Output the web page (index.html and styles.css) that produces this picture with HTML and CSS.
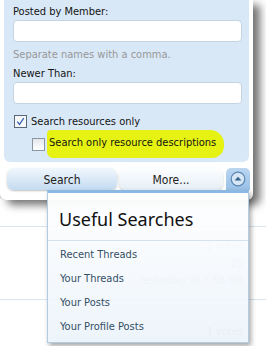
FILE: index.html
```html
<!DOCTYPE html>
<html lang="en">
<head>
    <meta charset="UTF-8">
    <meta name="viewport" content="width=device-width, initial-scale=1.0">
    <title>Search Resources</title>
    <link rel="stylesheet" href="styles.css">
</head>
<body>
    <div class="page">
        <div class="row row-top"></div>
        <div class="row row-mid">
            <div class="stats">
                <span>1 votes</span>
                <span>25</span>
                <span>Yesterday at 7:58 PM</span>
            </div>
        </div>
        <div class="row row-low">
            <div class="stats"><span>1 votes</span></div>
        </div>
    </div>

    <div class="popup">
        <form class="search-form" onsubmit="return false">
            <div class="fields">
                <label class="field-label" for="member">Posted by Member:</label>
                <input type="text" id="member" class="text-input">
                <p class="hint">Separate names with a comma.</p>
                <label class="field-label" for="newer">Newer Than:</label>
                <input type="text" id="newer" class="text-input">
                <label class="check">
                    <span class="box checked">
                        <svg width="9" height="9" viewBox="0 0 9 9"><path d="M1.2 4.6 L3.5 7.4 L7.8 1.2" fill="none" stroke="#3a63b0" stroke-width="1.3"/></svg>
                    </span>
                    Search resources only
                </label>
                <label class="check sub">
                    <span class="box"></span>
                    <span class="mark">Search only resource descriptions</span>
                </label>
            </div>
            <div class="buttons">
                <button class="btn primary">Search</button>
                <button class="btn">More...</button>
                <div class="toggle">
                    <svg width="16" height="16" viewBox="0 0 16 16">
                        <circle cx="8" cy="8" r="6.8" fill="#d6e6f6" stroke="#5b86b1" stroke-width="1.2"/>
                        <path d="M4.6 9.6 L8 5.8 L11.4 9.6 Z" fill="#34608c"/>
                    </svg>
                    <div class="menu">
                        <h3 class="menu-title">Useful Searches</h3>
                        <ul class="menu-list">
                            <li><a href="#">Recent Threads</a></li>
                            <li><a href="#">Your Threads</a></li>
                            <li><a href="#">Your Posts</a></li>
                            <li><a href="#">Your Profile Posts</a></li>
                        </ul>
                    </div>
                </div>
            </div>
        </form>
    </div>
</body>
</html>
```

FILE: styles.css
```css
body {
    margin: 0;
    background-color: #ffffff;
    font-family: 'DejaVu Sans Condensed', 'Liberation Sans', sans-serif;
    font-size: 11px;
    color: #141414;
    position: relative;
    height: 346px;
    overflow: hidden;
}
.row {
    border-bottom: 1px solid #d9e5ef;
}
.row-top {
    height: 226px;
}
.row-mid {
    height: 72px;
}
.row-low {
    height: 60px;
    border-bottom: none;
}
.stats {
    display: flex;
    flex-direction: column;
    align-items: flex-end;
    padding-right: 23px;
    line-height: 17px;
    color: #c8d0d8;
}
.row-mid .stats {
    padding-top: 11px;
}
.row-low .stats {
    padding-top: 23px;
}

/* popup panel */
.popup {
    position: absolute;
    left: 0;
    top: 0;
    width: 253px;
    height: 200px;
    background: #ffffff;
    border-radius: 0 0 6px 6px;
    box-shadow: -1px 0 0 #c4c4c4, 7px 5px 8px rgba(0, 0, 0, 0.55);
}
.fields {
    margin: 0 4px;
    padding: 4px 7px 10px 9px;
    background: #d9e8f7;
    border-radius: 0 0 6px 6px;
}
.field-label {
    display: block;
    line-height: 16px;
}
.text-input {
    display: block;
    width: 100%;
    height: 22px;
    margin: 0 0 5px;
    border: 1px solid #c5d4e3;
    border-radius: 4px;
    background: #ffffff;
    box-sizing: border-box;
}
.hint {
    margin: 0 0 3px;
    line-height: 16px;
    color: #979797;
}
.check {
    display: flex;
    align-items: center;
    height: 16px;
    margin-top: 9px;
    gap: 4px;
    padding-left: 1px;
}
.check.sub {
    margin-top: 7px;
    padding-left: 19px;
    gap: 2px;
}
.box {
    width: 11px;
    height: 11px;
    border: 1px solid #8a96a2;
    background: linear-gradient(#e3e7eb, #ffffff);
    display: flex;
    align-items: center;
    justify-content: center;
}
.box.checked {
    border-color: #56687a;
    background: #f6f8fa;
}
.mark {
    background: #e5f212;
    padding: 6px 8px 9px 2px;
    border-radius: 4px 14px 12px 6px;
}

/* buttons row */
.buttons {
    display: flex;
    margin-top: 6px;
    padding-left: 7px;
    gap: 2px;
}
.btn {
    height: 22px;
    border: none;
    border-radius: 7px;
    font-family: 'DejaVu Sans Condensed', 'Liberation Sans', sans-serif;
    font-size: 12px;
    color: #222;
    background: linear-gradient(#fdfeff, #e6eef6);
    box-shadow: 0 1px 2px rgba(0, 0, 0, 0.25);
    width: 104px;
    padding: 1px 0 0;
}
.btn.primary {
    width: 110px;
    background: linear-gradient(#f1f7fd, #c4dbf1);
}
.toggle {
    position: relative;
    margin-left: 1px;
    width: 24px;
    height: 22px;
    background: linear-gradient(#bad6f1, #98c0e7);
    border-radius: 5px 5px 0 0;
    display: flex;
    align-items: center;
    justify-content: center;
}

/* dropdown menu */
.menu {
    position: absolute;
    top: 22px;
    right: 1px;
    width: 200px;
    height: 149px;
    border: 1px solid #b2cce4;
    border-top: 3px solid #8bb9e3;
    background: linear-gradient(rgba(255, 255, 255, 0.96), rgba(234, 242, 250, 0.85));
    box-shadow: 2px 3px 5px rgba(0, 0, 0, 0.35);
}
.menu-title {
    margin: 0;
    padding: 14px 11px 9px;
    line-height: 24px;
    font-family: 'Noto Sans', 'Liberation Sans', sans-serif;
    font-size: 18px;
    font-weight: normal;
    color: #111;
    border-bottom: 1px solid #d4e2ef;
}
.menu-list {
    list-style: none;
    margin: 0;
    padding: 2px 12px 0;
}
.menu-list li {
    line-height: 24px;
}
.menu-list a {
    color: #344f66;
    text-decoration: none;
}
```
